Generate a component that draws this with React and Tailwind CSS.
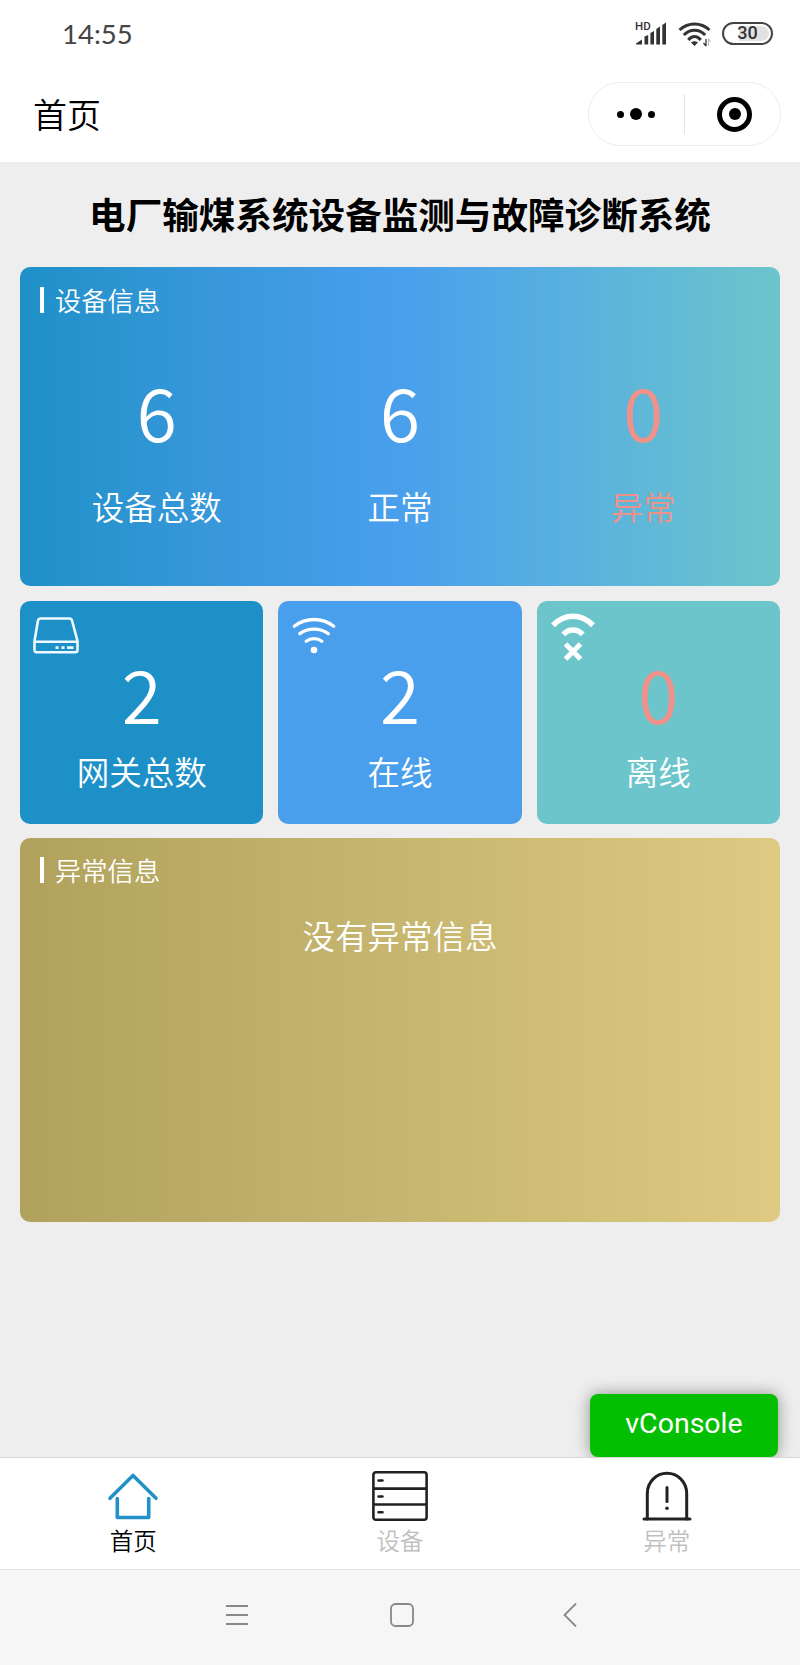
const DEVICE_STATS = [
	{ label: "设备总数", value: 6, color: "text-white" },
	{ label: "正常", value: 6, color: "text-white" },
	{ label: "异常", value: 0, color: "text-[#f0918a]" },
];

const GATEWAY_STATS = [
	{ label: "网关总数", value: 2, bg: "bg-[#1e90c8]", color: "text-white", Icon: DriveIcon },
	{ label: "在线", value: 2, bg: "bg-[#4a9fec]", color: "text-white", Icon: OnlineIcon },
	{ label: "离线", value: 0, bg: "bg-[#6cc5cb]", color: "text-[#f0918a]", Icon: OfflineIcon },
];

const TABS = [
	{ label: "首页", color: "text-black", Icon: HomeIcon },
	{ label: "设备", color: "text-[#bfbfbf]", Icon: RackIcon },
	{ label: "异常", color: "text-[#bfbfbf]", Icon: AlarmIcon },
];

function DriveIcon() {
	return (
		<svg className="size-12" viewBox="0 0 48 48" fill="none" stroke="#eefaff" strokeWidth="2.6">
			<path d="M8.500 5.500h29q2 0 2.500 2L45.500 28v9q0 2.300-2.500 2.300H5Q2.500 39.300 2.500 37V28L6 7.500Q6.500 5.500 8.500 5.500z" strokeLinejoin="round" />
			<path d="M2.500 28.800h43" />
			<path d="M23.500 34.700h3M29.500 34.700h3M35 34.700h6.500" strokeWidth="2.8" />
		</svg>
	);
}

function OnlineIcon() {
	return (
		<svg className="size-12" viewBox="0 0 48 48" fill="none" stroke="white" strokeWidth="3.3" strokeLinecap="round">
			<path d="M4.300 13.300Q13 6.500 24 6.500T43.700 13.300" />
			<path d="M9.800 20.700Q16 16.200 24 16.200T38.200 20.700" />
			<path d="M16.200 28.200Q19.500 25.700 24 25.700T31.800 28.200" />
			<circle cx="24" cy="37" r="3.300" fill="white" stroke="none" />
		</svg>
	);
}

function OfflineIcon() {
	return (
		<svg className="size-12" viewBox="0 0 48 48" fill="none" stroke="white" strokeWidth="5.500" strokeLinejoin="round">
			<path d="M4 12.200Q13 3.200 24 3.200T44 12.200" />
			<path d="M14.300 21.300Q18.500 17 24 17T33.700 21.300" />
			<path d="M16.500 31l15 15M31.500 31l-15 15" strokeWidth="5" />
		</svg>
	);
}

function HomeIcon() {
	return (
		<svg className="h-[52px] w-14" viewBox="0 0 56 52" fill="none" stroke="#2490c8" strokeWidth="3.6" strokeLinecap="round" strokeLinejoin="round">
			<path d="M5 28.300L28 5.500L51 28.300" />
			<path d="M12.300 28.500V47.500H43.700V28.500" />
		</svg>
	);
}

function RackIcon() {
	return (
		<svg className="h-[52px] w-14" viewBox="0 0 56 52" fill="none" stroke="#222" strokeWidth="2.600">
			<rect x="1.400" y="2.300" width="53.200" height="47.500" rx="2.500" />
			<path d="M1.400 18.600h53.200M1.400 34.500h53.200" />
			<path d="M6.500 10.500h4M6.500 26.500h4M6.500 42.300h4" strokeLinecap="round" />
		</svg>
	);
}

function AlarmIcon() {
	return (
		<svg className="h-[52px] w-14" viewBox="0 0 56 52" fill="none" stroke="#222" strokeWidth="3" strokeLinecap="round">
			<path d="M8.300 49V23.500a19.700 20.300 0 0 1 39.400 0V49" />
			<path d="M5 49h46" />
			<path d="M28 17.500v14" />
			<circle cx="28" cy="38.300" r="1.800" fill="#222" stroke="none" />
		</svg>
	);
}

function StatusBar() {
	return (
		<div className="flex h-16 items-center justify-between pt-1 pr-[27px] pl-[62px]">
			<span className="font-['Lato'] text-[27.500px] leading-8 text-[#444]">14:55</span>
			<div className="flex items-center">
				<svg className="h-7 w-9" viewBox="0 0 36 28" fill="#333">
					<text x="4" y="9.500" fontSize="11.500" fontWeight="500" fontFamily="Roboto, sans-serif">HD</text>
					<path d="M5 24.500v-1l6-4V24.500zM13.500 24.500V16.500l3.700-1.500V24.500zM19.400 24.500V13l3.600-2V24.500zM25.300 24.500V9l3.700-2.500V24.500zM31.300 24.500V5l3.700-2.500V24.500z" />
				</svg>
				<svg className="ml-[9px] h-7 w-9" viewBox="0 0 36 28" fill="none" stroke="#333" strokeWidth="3">
					<path d="M3.500 10Q10 4 18.500 4T33.500 10" />
					<path d="M7.800 15Q12.500 10.300 18.500 10.300T29.200 15" />
					<path d="M12.300 20Q15 16.500 18.500 16.500T24.700 20" />
					<path d="M15 22.500Q18.500 20 22 22.500L18.500 26z" fill="#333" stroke="none" />
					<path d="M30 19v7M27.500 23l2.500 3" strokeWidth="1.300" />
					<path d="M32.500 26v-7l2 2.500" stroke="#bbb" strokeWidth="1.200" />
				</svg>
				<div className="-mt-0.5 ml-2.5 flex h-[23px] w-[51px] items-center justify-center rounded-full border-2 border-[#444] p-0.5">
					<span className="flex h-full w-full items-center justify-center rounded-full bg-linear-to-r from-white from-30% to-[#e2e2e2] to-30% font-['Roboto'] text-[18px] leading-none font-medium text-[#333]">
						30
					</span>
				</div>
			</div>
		</div>
	);
}

function NavBar() {
	return (
		<div className="flex h-[98px] items-center justify-between pt-0.5 pr-[19px] pl-[33px]">
			<h1 className="text-[34px] leading-10 font-[350] text-black">首页</h1>
			<div className="flex h-16 w-[193px] items-center rounded-full border border-[#ececec]">
				<div className="flex flex-1 items-center justify-center gap-[6px] pr-0.5">
					<span className="size-[7px] rounded-full bg-black" />
					<span className="size-3 rounded-full bg-black" />
					<span className="size-[7px] rounded-full bg-black" />
				</div>
				<div className="h-10 w-px bg-[#e4e4e4]" />
				<div className="flex w-[95px] justify-center pl-1">
					<div className="flex size-[35px] items-center justify-center rounded-full border-5 border-black">
						<span className="size-3 rounded-full bg-black" />
					</div>
				</div>
			</div>
		</div>
	);
}

function SectionTitle({ children }) {
	return (
		<div className="flex items-center gap-[11px] pl-5">
			<span className="h-[26px] w-1 bg-white" />
			<h3 className="-mt-px text-[26.300px] leading-[33px] font-[350]">{children}</h3>
		</div>
	);
}

function App() {
	return (
		<div className="flex h-[1665px] w-[800px] flex-col bg-[#eee] font-['Noto_Sans_CJK_SC',sans-serif] text-white">
			<header className="h-[162px] bg-white">
				<StatusBar />
				<NavBar />
			</header>

			<main className="flex flex-1 flex-col px-5">
				<h2 className="pt-[27px] text-center text-[36.600px] leading-[50px] font-bold whitespace-nowrap text-black">
					电厂输煤系统设备监测与故障诊断系统
				</h2>

				<section className="mt-7 h-[319px] rounded-[10px] bg-linear-to-r from-[#1e90c8] via-[#4a9fec] to-[#6cc5cb] pt-[17px]">
					<SectionTitle>设备信息</SectionTitle>
					<div className="mt-14 grid grid-cols-3 px-[15px] text-center">
						{DEVICE_STATS.map((stat) => (
							<div key={stat.label} className={stat.color}>
								<p className="text-[73px] leading-[76px] font-[350]">{stat.value}</p>
								<p className="mt-[38px] text-[32.500px] leading-10 font-[350]">{stat.label}</p>
							</div>
						))}
					</div>
				</section>

				<section className="mt-[15px] grid grid-cols-3 gap-[15px]">
					{GATEWAY_STATS.map(({ label, value, bg, color, Icon }) => (
						<div key={label} className={`h-[223px] rounded-[10px] pt-3 text-center ${bg}`}>
							<div className="pl-3">
								<Icon />
							</div>
							<p className={`-mt-[5px] text-[73px] leading-[72px] font-[350] ${color}`}>{value}</p>
							<p className="mt-[23px] text-[32.500px] leading-10 font-[350]">{label}</p>
						</div>
					))}
				</section>

				<section className="mt-[14px] h-[384px] rounded-[10px] bg-linear-to-r from-[#b0a25c] to-[#deca82] pt-4">
					<SectionTitle>异常信息</SectionTitle>
					<p className="mt-[29px] text-center text-[32.500px] leading-10 font-[350]">没有异常信息</p>
				</section>

				<button className="mt-auto mr-[2px] h-[63px] w-[188px] self-end rounded-lg bg-[#04be02] pb-0.5 font-['Roboto'] text-[28.500px] leading-none text-white shadow-[0_0_16px_rgba(0,0,0,0.4)]">
					vConsole
				</button>
			</main>

			<nav className="relative grid h-[112px] grid-cols-3 border-t border-[#d6d6d6] bg-white">
				{TABS.map(({ label, color, Icon }) => (
					<div key={label} className="flex flex-col items-center pt-3">
						<Icon />
						<span className={`mt-0.5 text-[23.500px] leading-8 font-[350] ${color}`}>{label}</span>
					</div>
				))}
			</nav>

			<footer className="flex h-24 items-center justify-center gap-[141px] border-t border-[#e2e2e2] bg-[#f6f6f6] pr-px pb-1.5 pl-1">
				<svg className="size-6" viewBox="0 0 24 24" fill="none" stroke="#888" strokeWidth="1.800">
					<path d="M1 3h22M1 12h22M1 21h22" />
				</svg>
				<svg className="size-6" viewBox="0 0 24 24" fill="none" stroke="#888" strokeWidth="1.800">
					<rect x="1" y="1" width="22" height="22" rx="4.500" />
				</svg>
				<svg className="size-6" viewBox="0 0 24 24" fill="none" stroke="#888" strokeWidth="1.800">
					<path d="M21 .5L9.500 12L21 23.500" />
				</svg>
			</footer>
		</div>
	);
}

export default App;
